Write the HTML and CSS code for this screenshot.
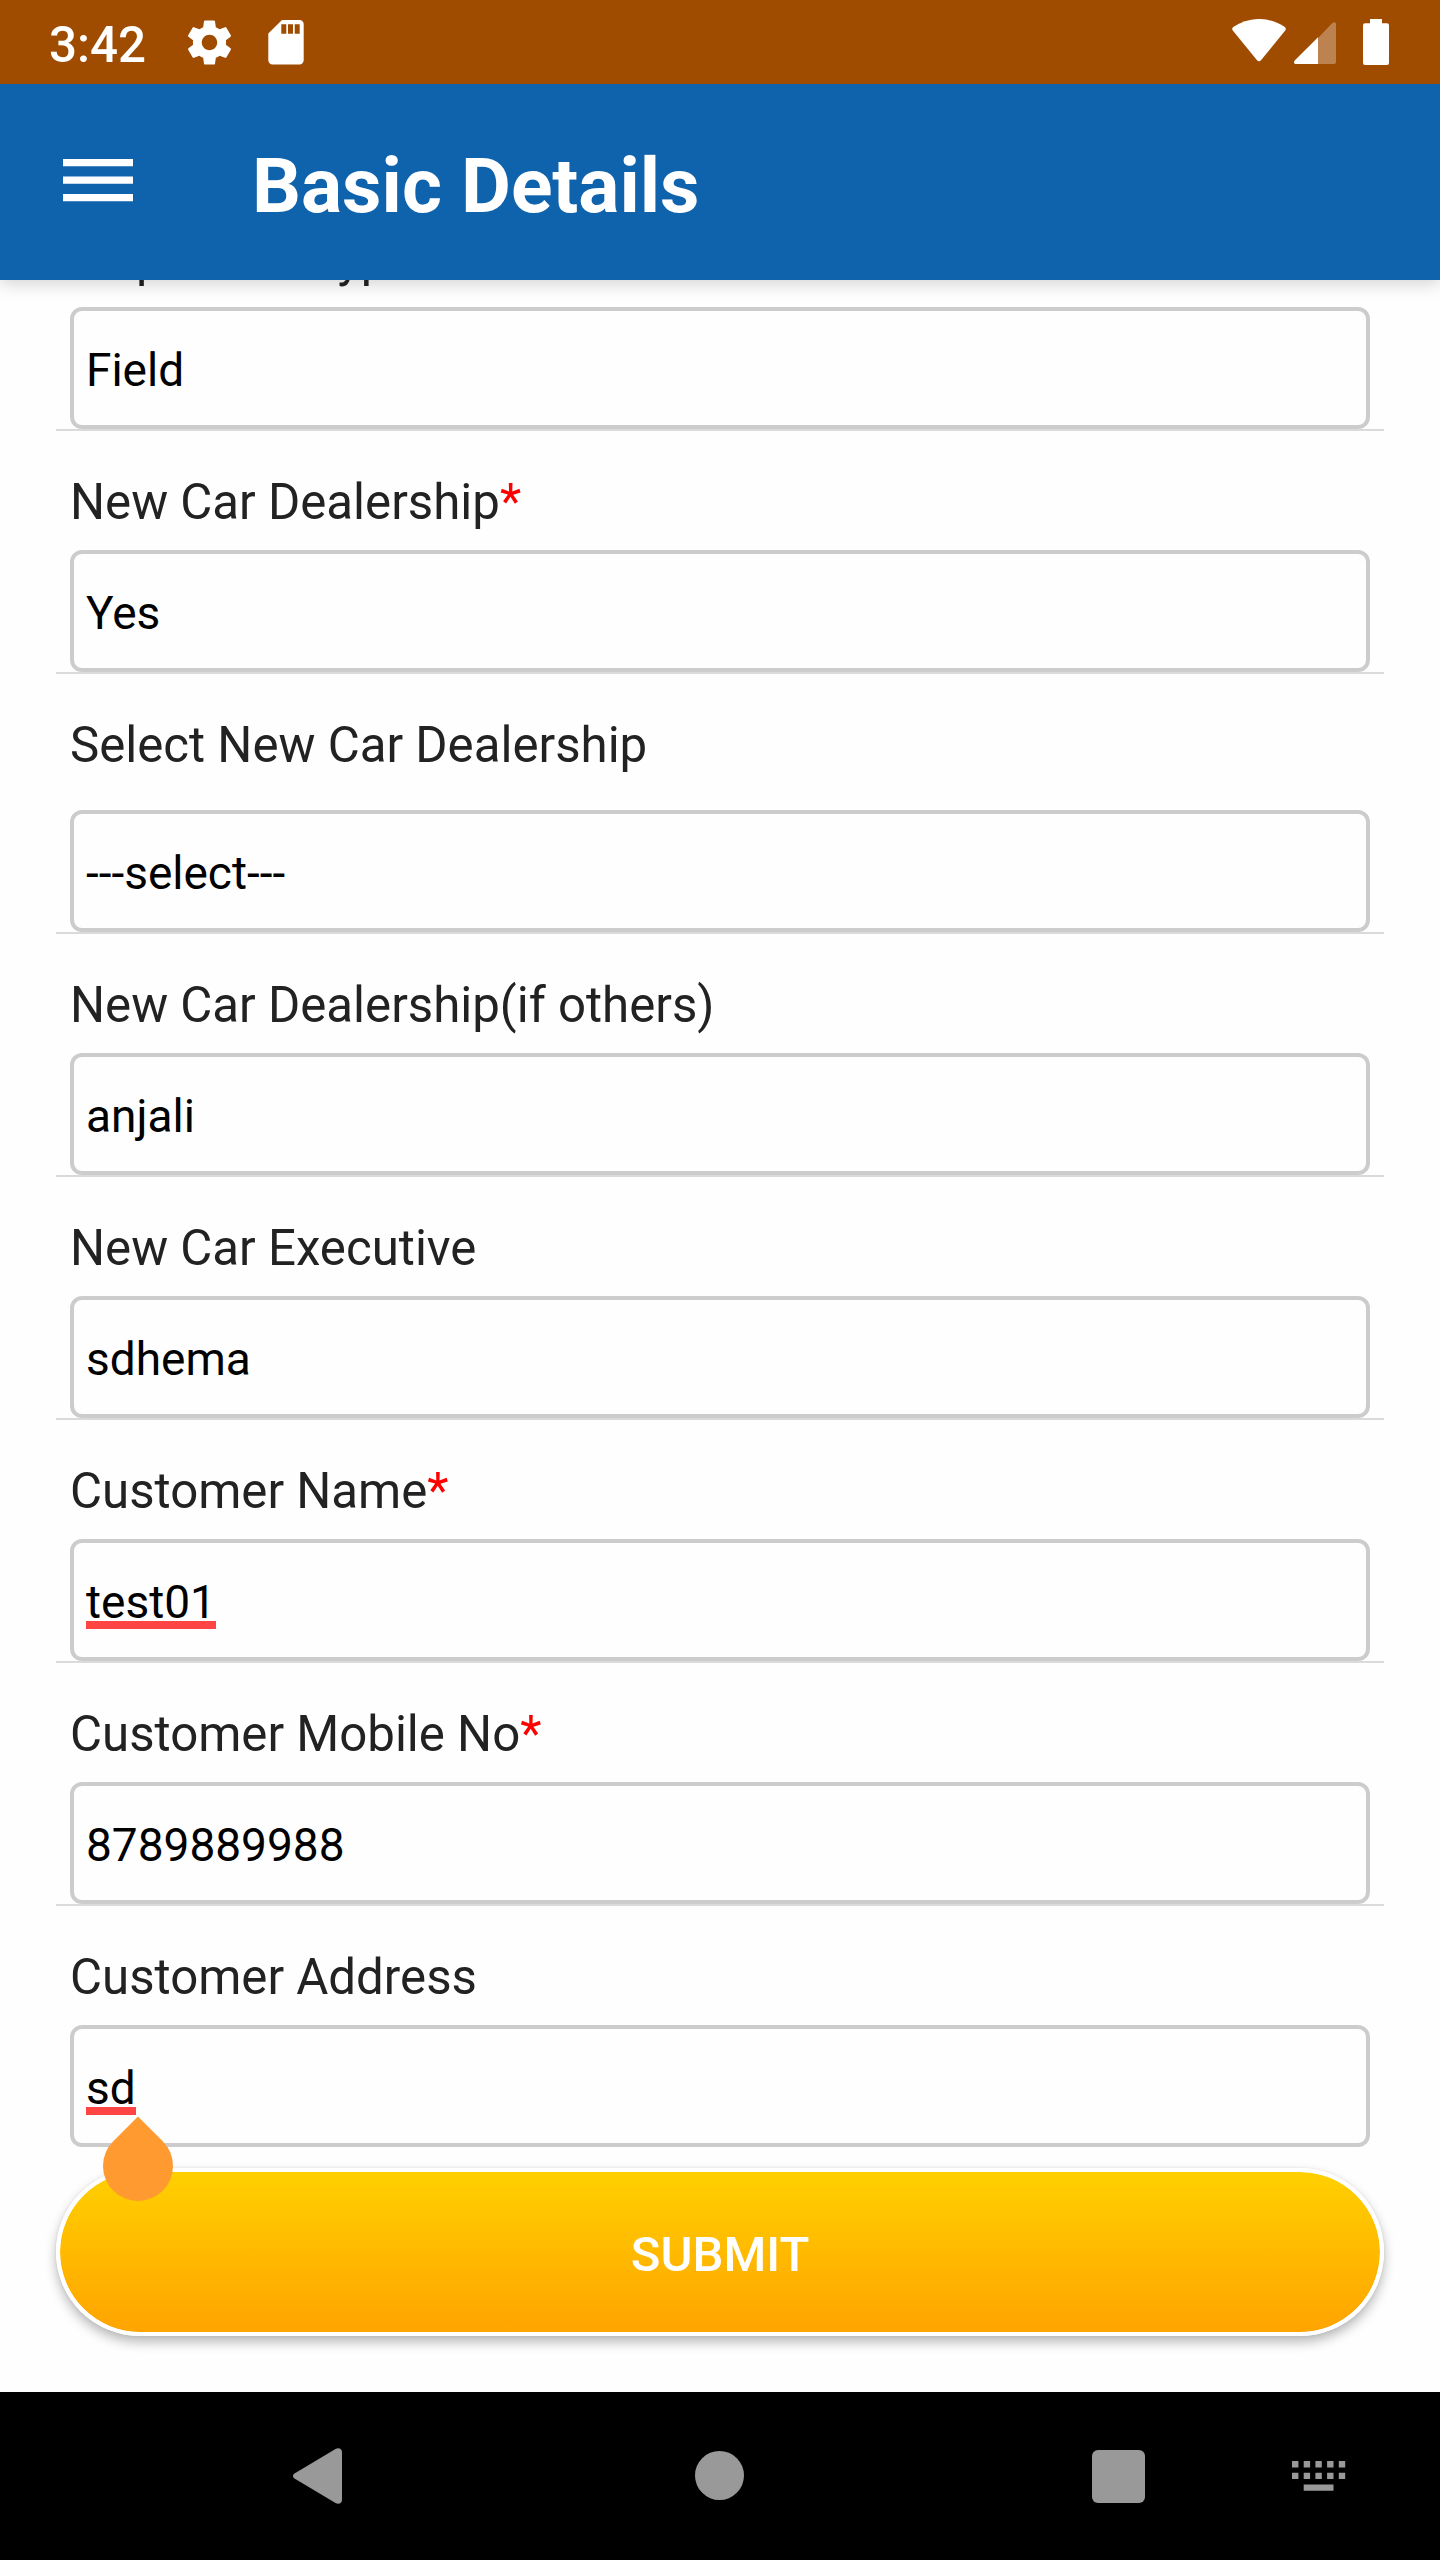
FILE: index.html
```html
<!DOCTYPE html>
<html lang="en">
<head>
<meta charset="utf-8">
<title>Basic Details</title>
<link rel="stylesheet" href="styles.css">
</head>
<body>
<div class="screen">
  <header class="status-bar">
    <span class="clock">3:42</span>
    <svg class="status-gear" viewBox="0 0 24 24"><path fill="#fff" d="M19.43 12.98c.04-.32.07-.64.07-.98s-.03-.66-.07-.98l2.11-1.65c.19-.15.24-.42.12-.64l-2-3.46c-.12-.22-.39-.3-.61-.22l-2.49 1c-.52-.4-1.08-.73-1.69-.98l-.38-2.65C14.46 2.18 14.25 2 14 2h-4c-.25 0-.46.18-.49.42l-.38 2.65c-.61.25-1.17.59-1.69.98l-2.49-1c-.23-.09-.49 0-.61.22l-2 3.46c-.13.22-.07.49.12.64l2.11 1.65c-.04.32-.07.65-.07.98s.03.66.07.98l-2.11 1.65c-.19.15-.24.42-.12.64l2 3.46c.12.22.39.3.61.22l2.49-1c.52.4 1.08.73 1.69.98l.38 2.65c.03.24.24.42.49.42h4c.25 0 .46-.18.49-.42l.38-2.65c.61-.25 1.17-.59 1.69-.98l2.49 1c.23.09.49 0 .61-.22l2-3.46c.12-.22.07-.49-.12-.64l-2.11-1.65zM12 15.5c-1.93 0-3.5-1.57-3.5-3.5s1.57-3.500 3.500-3.500 3.500 1.570 3.500 3.500-1.570 3.500-3.500 3.500z"/></svg>
    <svg class="status-sd" viewBox="0 0 36 45"><path fill="#fff" fill-rule="evenodd" d="M14 0h17.500a4.200 4.200 0 0 1 4.200 4.200v36a4.200 4.200 0 0 1-4.200 4.200h-27A4.200 4.200 0 0 1 .3 40.200V13.500zM13.300 4.300v9.400h5V4.300zM20 4.300v9.400h5V4.300zM26.700 4.300v9.400h5V4.300z"/></svg>
    <svg class="status-wifi" viewBox="0 0 54 43"><path fill="#fff" d="M.8 11.500C-.2 10.200 0 9 1.200 8 17-2.700 37-2.700 52.800 8c1.200 1 1.400 2.200.4 3.500L29 41.200c-1.200 1.400-2.800 1.400-4 0z"/></svg>
    <svg class="status-signal" viewBox="0 0 42 42"><path fill="#fff" fill-opacity=".31" d="M24 16 38.600.8C40-.5 42 .2 42 2v38a2 2 0 0 1-2 2H24z"/><path fill="#fff" d="M24 15.200V42H2C0 42-.6 40 .7 38.600z"/></svg>
    <svg class="status-battery" viewBox="0 0 26 46"><path fill="#fff" d="M7 0h12v4.300h5a2 2 0 0 1 2 2V44a2 2 0 0 1-2 2H2a2 2 0 0 1-2-2V6.300a2 2 0 0 1 2-2h5z"/></svg>
  </header>

  <div class="app-bar">
    <svg class="menu" viewBox="0 0 70 43"><path fill="#fff" d="M0 0h70v7.300H0zM0 17.500h70v7.300H0zM0 35h70v7.300H0z"/></svg>
    <h1 class="title">Basic Details</h1>
  </div>

  <main class="form">
    <div class="row"><label class="label">Inspection Type</label><div class="input">Field</div></div>
    <div class="row"><label class="label">New Car Dealership<span class="required">*</span></label><div class="input">Yes</div></div>
    <div class="row"><label class="label label-spaced">Select New Car Dealership</label><div class="input">---select---</div></div>
    <div class="row"><label class="label">New Car Dealership(if others)</label><div class="input">anjali</div></div>
    <div class="row"><label class="label">New Car Executive</label><div class="input">sdhema</div></div>
    <div class="row"><label class="label">Customer Name<span class="required">*</span></label><div class="input"><span class="misspelled">test01</span></div></div>
    <div class="row"><label class="label">Customer Mobile No<span class="required">*</span></label><div class="input">8789889988</div></div>
    <div class="row row-last"><label class="label">Customer Address</label><div class="input"><span class="misspelled">sd<span class="cursor-handle"></span></span></div></div>
    <button class="submit">SUBMIT</button>
  </main>

  <nav class="nav-bar">
    <svg class="nav-back" viewBox="0 0 49 56"><path fill="#999" d="M1.500 25.500 42.500 1C45.500-.8 49 .5 49 4v48c0 3.500-3.500 4.800-6.500 3L1.500 30.500c-2-1.300-2-3.700 0-5z"/></svg>
    <svg class="nav-home" viewBox="0 0 49 49"><circle cx="24.500" cy="24.500" r="24.500" fill="#999"/></svg>
    <svg class="nav-recent" viewBox="0 0 53 53"><rect width="53" height="53" rx="6" fill="#999"/></svg>
    <svg class="nav-keyboard" viewBox="0 0 54 30"><path fill="#999" d="M0 0h6.400v6.400H0zM11.700 0h6.400v6.400h-6.400zM23.400 0h6.400v6.400h-6.400zM35.100 0h6.400v6.400h-6.400zM46.800 0h6.400v6.400h-6.400zM0 11.700h6.400v6.400H0zM11.700 11.700h6.400v6.400h-6.400zM23.400 11.700h6.400v6.400h-6.400zM35.100 11.700h6.400v6.400h-6.400zM46.800 11.700h6.400v6.400h-6.400zM11.700 23.400h29.800v6.400H11.700z"/></svg>
  </nav>
</div>
</body>
</html>
```

FILE: styles.css
```css
* { box-sizing: border-box; }

body {
  margin: 0;
  font-family: Roboto, sans-serif;
  background: #fefefe;
}

svg { display: block; flex: none; }

.screen {
  display: flex;
  flex-direction: column;
  width: 1440px;
  height: 2560px;
  overflow: hidden;
}

/* System status bar */
.status-bar {
  z-index: 2;
  display: flex;
  align-items: flex-start;
  flex: none;
  height: 84px;
  padding: 0 51px 0 49px;
  background: #9f4b00;
}

.clock {
  width: 134px;
  padding-top: 15px;
  font-size: 49.3px;
  font-weight: 500;
  line-height: 60px;
  color: #fff;
}

.status-gear { width: 53px; height: 53px; margin-top: 16px; }
.status-sd { width: 36px; height: 45px; margin: 20px 0 0 32px; }
.status-wifi { width: 54px; height: 43px; margin: 19px 0 0 auto; }
.status-signal { width: 42px; height: 42px; margin: 22px 0 0 8px; }
.status-battery { width: 26px; height: 46px; margin: 19px 0 0 27px; }

/* Toolbar */
.app-bar {
  z-index: 1;
  display: flex;
  align-items: flex-start;
  flex: none;
  height: 196px;
  padding-left: 63px;
  background: #0f62ac;
  box-shadow: 0 4px 16px rgba(0, 0, 0, 0.17);
}

.menu { width: 70px; height: 43px; margin-top: 75px; }

.title {
  margin: 57px 0 0 119px;
  font-size: 76.8px;
  font-weight: 700;
  line-height: 90px;
  color: #fff;
}

/* Form, scrolled so its first label sits under the toolbar */
.form {
  display: flex;
  flex-direction: column;
  flex: 1;
  margin-top: -92px;
  padding: 0 56px;
}

.row {
  padding: 0 14px;
  border-bottom: 2px solid #dadada;
}

.row-last { border-bottom: 0; }

.label {
  display: block;
  height: 119px;
  padding-top: 41px;
  font-size: 49.2px;
  line-height: 60px;
  color: #222;
}

.label-spaced { height: 136px; }

.required { color: #f00; }

.input {
  height: 122px;
  padding: 29px 12px 0;
  border: 4px solid #ccc;
  border-radius: 12px;
  font-size: 46px;
  line-height: 60px;
  color: #000;
}

.misspelled {
  position: relative;
  display: inline-block;
  height: 60px;
}

.misspelled::after {
  content: "";
  position: absolute;
  left: 0;
  right: 0;
  top: 49px;
  height: 7.5px;
  background: #ff4444;
}

/* Teardrop text handle below the caret */
.cursor-handle {
  position: absolute;
  z-index: 1;
  left: calc(100% - 33px);
  top: 73px;
  width: 70px;
  height: 70px;
  border-radius: 0 50% 50% 50%;
  background: #ff9a30;
  transform: rotate(45deg);
}

.submit {
  height: 168px;
  margin: 21px 0 0;
  padding: 6px 0 0;
  border: 4px solid #fff;
  border-radius: 84px;
  background: linear-gradient(#ffd000, #ffa400) padding-box;
  box-shadow: 0 6px 12px rgba(0, 0, 0, 0.28), 0 0 3px rgba(0, 0, 0, 0.08);
  font-family: inherit;
  font-size: 49px;
  font-weight: 500;
  line-height: 60px;
  color: #fff;
}

/* System navigation */
.nav-bar {
  z-index: 2;
  display: flex;
  align-items: flex-start;
  flex: none;
  height: 168px;
  padding-left: 293px;
  background: #000;
}

.nav-back { width: 49px; height: 56px; margin-top: 56px; }
.nav-home { width: 49px; height: 49px; margin: 59px 0 0 353px; }
.nav-recent { width: 53px; height: 53px; margin: 57.500px 0 0 347.500px; }
.nav-keyboard { width: 54px; height: 30px; margin: 69px 0 0 147px; }
```
